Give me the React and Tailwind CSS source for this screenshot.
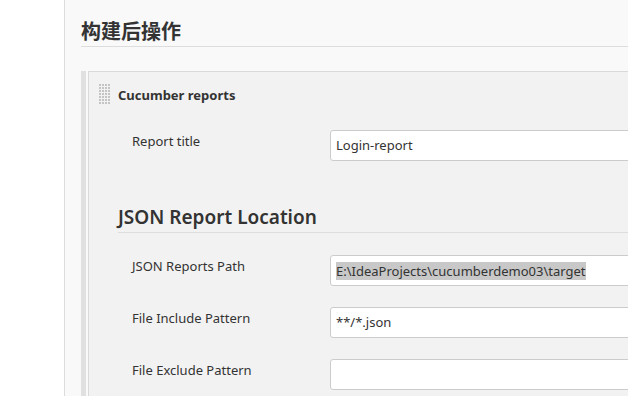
import { useState } from "react";

const font = { fontFamily: '"Noto Sans", "Noto Sans CJK SC", sans-serif' };

// little dotted grip shown left of the section title
const DragHandle = () => (
  <svg width="12" height="21" className="block">
    {Array.from({ length: 7 }).map((_, r) =>
      Array.from({ length: 4 }).map((_, c) => (
        <rect key={`${r}-${c}`} x={c * 3} y={r * 3} width="2" height="2" fill="#c4c4c4" />
      ))
    )}
  </svg>
);

const Field = ({ label, value, selected, className = "" }) => (
  <div className={`flex ${className}`}>
    <div className="w-[198px] shrink-0 pt-[2px] text-[13px] leading-[18px] text-[#333]">{label}</div>
    <div className="flex h-[31px] w-[320px] shrink-0 items-center rounded-[3px] border border-[#cccccc] bg-white pl-[5px] text-[13px] text-[#333]">
      {selected ? <span className="bg-[#c8c8c8] leading-[18px]">{value}</span> : value}
    </div>
  </div>
);

export default function App() {
  const [title] = useState("Login-report");

  return (
    <div className="flex h-[396px] w-[628px] overflow-hidden bg-white" style={font}>
      <div className="w-[65px] shrink-0 border-r border-[#dcdcdc] bg-white" />
      <div className="flex-1 bg-[#f9f9f9] pl-[16px]">
        <h2 className="mt-[19px] border-b border-[#dddddd] pb-[1px] text-[20px] font-bold leading-[26px] text-[#333]">
          构建后操作
        </h2>

        <div className="mt-[24px] flex h-[400px]">
          <div className="w-[5px] shrink-0 bg-[#e0e0e0]" />
          <div className="ml-[2px] flex-1 border-l border-t border-[#d9d9d9] bg-[#f2f2f2]">
            <div className="flex items-center pl-[10px] pt-[12px]">
              <DragHandle />
              <span className="ml-[7px] text-[13px] font-bold leading-[18px] text-[#333]">Cucumber reports</span>
            </div>

            <div className="pl-[43px]">
              <Field className="mt-[25px]" label="Report title" value={title} />
            </div>

            <div className="mt-[43px] pl-[29px]">
              <div className="border-b border-[#dddddd] pb-[2px] text-[19px] font-semibold leading-[26px] text-[#333]">
                JSON Report Location
              </div>
              <div className="pl-[14px]">
                <Field className="mt-[22px]" label="JSON Reports Path" value="E:\IdeaProjects\cucumberdemo03\target" selected />
                <Field className="mt-[21px]" label="File Include Pattern" value="**/*.json" />
                <Field className="mt-[21px]" label="File Exclude Pattern" value="" />
              </div>
            </div>
          </div>
        </div>
      </div>
    </div>
  );
}
